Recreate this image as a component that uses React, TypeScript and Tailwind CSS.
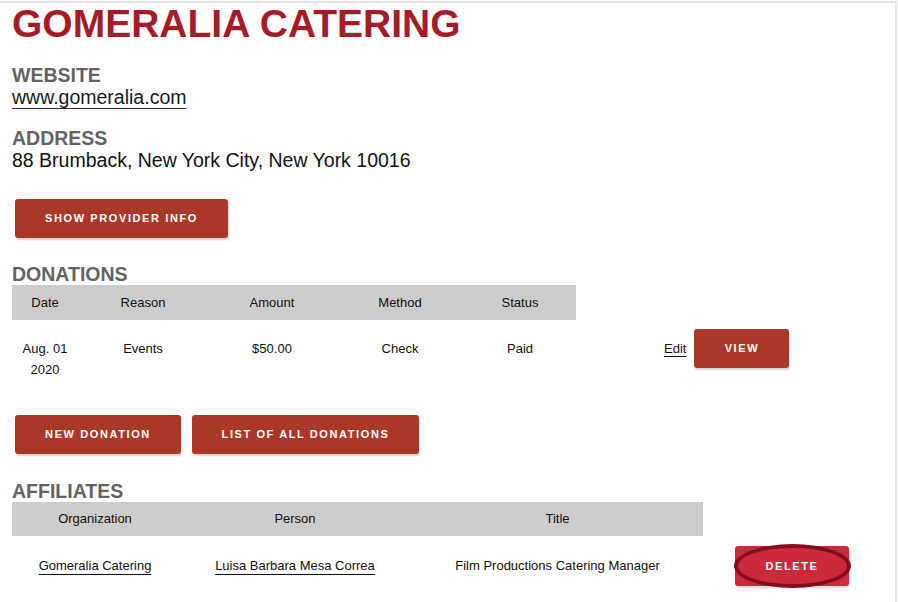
import React from "react"

const sans = "font-['Liberation_Sans',Arial,sans-serif]"

function RedButton({ label, className = "" }: { label: string; className?: string }) {
  return (
    <button
      className={`h-[39px] rounded-[3px] bg-[#a93826] text-white text-[11px] font-bold tracking-[1.6px] shadow-[1px_2px_2px_rgba(0,0,0,0.18)] ${sans} ${className}`}
    >
      {label}
    </button>
  )
}

function SectionTitle({ children }: { children: React.ReactNode }) {
  return <h2 className={`text-[19.5px] leading-[21px] font-bold text-[#636363] ${sans}`}>{children}</h2>
}

const donations = [{ date: ["Aug. 01", "2020"], reason: "Events", amount: "$50.00", method: "Check", status: "Paid" }]

const affiliates = [
  { org: "Gomeralia Catering", person: "Luisa Barbara Mesa Correa", title: "Film Productions Catering Manager" },
]

export default function App() {
  return (
    <div className="bg-white min-h-[602px] pt-[1px]">
      <div className={`w-[897px] min-h-[601px] border-t-2 border-r-2 border-[#e2e2e2] pl-[12px] ${sans}`}>
        <h1 className="text-[39px] leading-[40px] font-bold text-[#a61b29] mt-[1px]">GOMERALIA CATERING</h1>

        <div className="mt-[21px]">
          <SectionTitle>WEBSITE</SectionTitle>
          <a className="text-[19.5px] leading-[22px] text-[#1a1a1a] underline underline-offset-[4px] decoration-[#333]">
            www.gomeralia.com
          </a>
        </div>

        <div className="mt-[17px]">
          <SectionTitle>ADDRESS</SectionTitle>
          <p className="text-[19.5px] leading-[22px] text-[#111]">88 Brumback, New York City, New York 10016</p>
        </div>

        <RedButton label="SHOW PROVIDER INFO" className="mt-[28px] ml-[3px] w-[213px]" />

        {/* donations */}
        <div className="mt-[26px]">
          <SectionTitle>DONATIONS</SectionTitle>
          <div className="w-[564px] h-[35px] bg-[#cccccc] grid grid-cols-[66px_130px_128px_128px_112px] items-center text-center text-[13px] text-[#111]">
            <span>Date</span>
            <span>Reason</span>
            <span>Amount</span>
            <span>Method</span>
            <span>Status</span>
          </div>
          {donations.map((d) => (
            <div key={d.amount} className="flex items-start h-[74px] pt-[17px] text-[13px] leading-[21px] text-[#111]">
              <div className="w-[564px] grid grid-cols-[66px_130px_128px_128px_112px] text-center pt-[1px]">
                <span>
                  {d.date[0]}
                  <br />
                  {d.date[1]}
                </span>
                <span>{d.reason}</span>
                <span>{d.amount}</span>
                <span>{d.method}</span>
                <span>{d.status}</span>
              </div>
              <a className="ml-[88px] mt-[1px] underline underline-offset-[3px]">Edit</a>
              <RedButton label="VIEW" className="ml-[8px] -mt-[8px] w-[95px]" />
            </div>
          ))}
        </div>

        <div className="flex gap-[11px] ml-[3px] mt-[21px]">
          <RedButton label="NEW DONATION" className="w-[166px]" />
          <RedButton label="LIST OF ALL DONATIONS" className="w-[227px]" />
        </div>

        {/* affiliates */}
        <div className="mt-[27px]">
          <SectionTitle>AFFILIATES</SectionTitle>
          <div className="w-[691px] h-[34px] bg-[#cccccc] grid grid-cols-[166px_234px_291px] items-center text-center text-[13px] text-[#111]">
            <span>Organization</span>
            <span>Person</span>
            <span>Title</span>
          </div>
          {affiliates.map((a) => (
            <div key={a.person} className="flex items-center h-[60px] text-[13px] text-[#111]">
              <div className="w-[691px] grid grid-cols-[166px_234px_291px] text-center">
                <span>
                  <a className="underline underline-offset-[4px]">{a.org}</a>
                </span>
                <span>
                  <a className="underline underline-offset-[4px]">{a.person}</a>
                </span>
                <span>{a.title}</span>
              </div>
              <div className="relative ml-[32px]">
                <button className={`h-[40px] w-[114px] rounded-[3px] bg-[#cc2a3b] text-white text-[11px] font-bold tracking-[1.6px] shadow-[1px_2px_2px_rgba(0,0,0,0.15)] ${sans}`}>
                  DELETE
                </button>
                {/* focus ring */}
                <span className="pointer-events-none absolute left-[-1px] top-[-2px] w-[117px] h-[44px] rounded-[50%] border-[4px] border-[#860b1c]" />
              </div>
            </div>
          ))}
        </div>
      </div>
    </div>
  )
}
